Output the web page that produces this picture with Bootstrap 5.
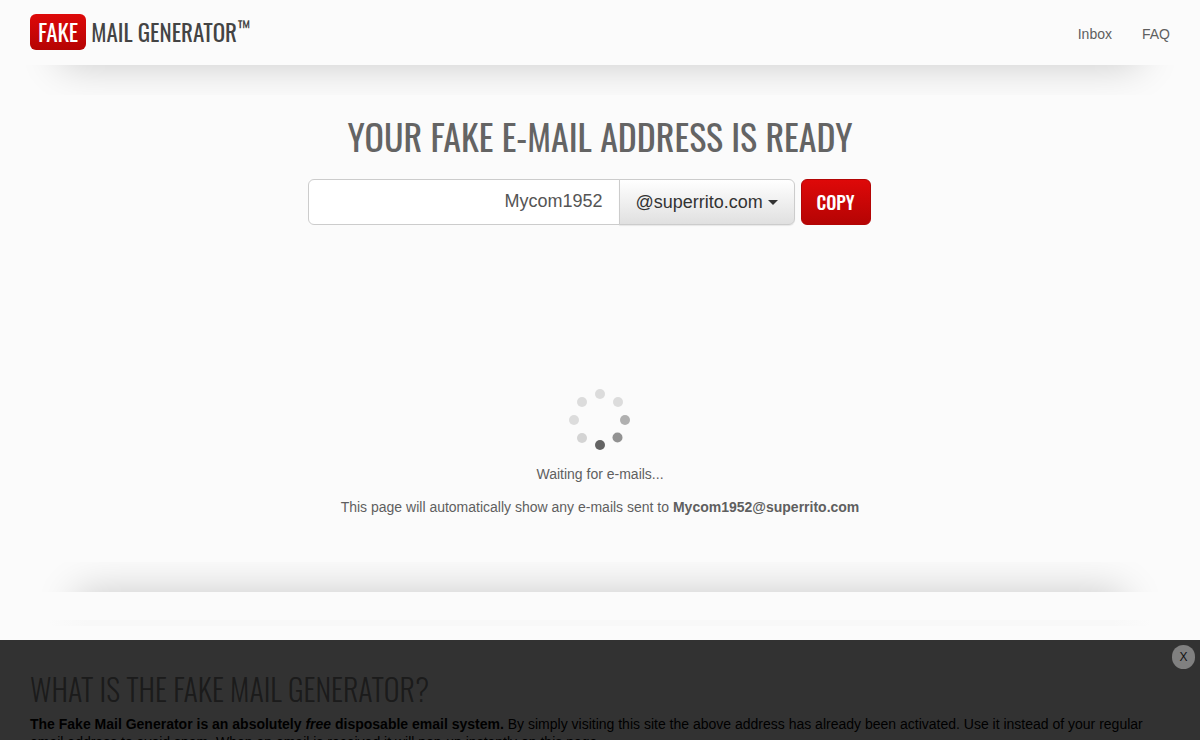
<!DOCTYPE html>
<html lang="en">
<head>
<meta charset="utf-8">
<meta name="viewport" content="width=device-width, initial-scale=1">
<title>Fake Mail Generator</title>
<link href="https://cdn.jsdelivr.net/npm/bootstrap@5.3.0/dist/css/bootstrap.min.css" rel="stylesheet">
<style>
  body { background: #fbfbfb; color: #5f5f5f; font: 14px/20px "Liberation Sans", Arial, sans-serif; }
  .display-face { font-family: Oswald, "Liberation Sans Narrow", "Roboto Condensed", sans-serif; }
  .page-pad { padding-left: 30px; padding-right: 30px; }
  .site-head { height: 65px; padding-top: 14px; }
  .brand { color: #444; font-size: 23px; line-height: 36px; gap: 5px; }
  .brand:hover { color: #222; }
  .brand-tag { background: linear-gradient(#de0909, #b50404); color: #fff; border-radius: 6px; padding: 0 8px; }
  .brand-tm { font-size: 18px; line-height: 26px; }
  .top-nav { gap: 30px; padding-top: 10px; }
  .top-nav a { color: #5f5f5f; }
  .shade { height: 30px; overflow: hidden; }
  .shade::before { content: ""; display: block; height: 80px; box-shadow: 0 0 40px rgba(0,0,0,.2); }
  .shade-down::before { margin: -80px 60px 0; }
  .shade-up::before { margin: 30px 76px 0; }
  .shade-thin { height: 6px; margin: 28px 48px 0; background: linear-gradient(90deg, #fbfbfb, #f8f8f8 40px, #f8f8f8 calc(100% - 40px), #fbfbfb); }
  .ready-title { font-size: 36px; line-height: 44px; color: #646464; margin: 19px 0 21px; }
  .addr-row { gap: 6px; padding-right: 22px; }
  .addr-group { width: 487px; }
  .addr-group .form-control { height: 46px; font-size: 18px; line-height: 24px; color: #555; border-color: #ccc; border-radius: 6px; padding: 9px 16px 11px; text-align: right; background: #fff; }
  .btn-domain { width: 176px; font-size: 18px; line-height: 24px; color: #333; border: 1px solid #ccc; border-radius: 6px; background: linear-gradient(#fff, #e0e0e0); padding: 10px 16px; white-space: nowrap; box-shadow: 0 1px 1px rgba(0,0,0,.08); }
  .btn-domain::after { margin-left: 5px; vertical-align: 3px; border-top-width: 5px; border-left-width: 5px; border-right-width: 5px; }
  .btn-copy { width: 70px; height: 46px; padding: 0; font-size: 18px; font-weight: 500; color: #fff; border: 1px solid #b30505; border-radius: 6px; background: linear-gradient(#de0909, #b50404); }
  .btn-copy:hover { color: #fff; }
  .wait-box { padding: 162px 0 32px; }
  .spin-dots { margin-bottom: 13px; }
  .wait-box p { margin: 0 0 13px; }
  .about { padding-top: 44px; color: #000; }
  .about h2 { font-size: 30px; line-height: 38px; color: #858585; margin: 0 0 7px; }
  .about p { line-height: 18px; }
  .ad-bar { height: 100px; background: rgba(0,0,0,.8); }
  .ad-close { top: 5px; right: 5px; width: 23px; height: 24px; border: 0; border-radius: 12px; background: #808080; color: #111; font-size: 12px; line-height: 24px; padding: 0; }
</style>
</head>
<body>
<header class="site-head page-pad d-flex justify-content-between align-items-start">
  <a href="#" class="brand display-face d-flex text-decoration-none"><span class="brand-tag">FAKE</span><span class="d-flex"><span>MAIL GENERATOR</span><span class="brand-tm">™</span></span></a>
  <nav class="top-nav d-flex" aria-label="Main"><a class="text-decoration-none" href="#inbox">Inbox</a><a class="text-decoration-none" href="#faq">FAQ</a></nav>
</header>
<div class="shade shade-down"></div>
<main id="inbox" class="text-center">
  <h1 class="ready-title display-face fw-normal">YOUR FAKE E-MAIL ADDRESS IS READY</h1>
  <form class="addr-row d-flex justify-content-center">
    <div class="addr-group input-group flex-nowrap">
      <input type="text" class="form-control" value="Mycom1952" aria-label="E-mail name">
      <button type="button" class="btn btn-domain dropdown-toggle" data-bs-toggle="dropdown" aria-expanded="false">@superrito.com</button>
      <ul class="dropdown-menu dropdown-menu-end"><li><a class="dropdown-item" href="#">@superrito.com</a></li></ul>
    </div>
    <button type="button" class="btn btn-copy display-face">COPY</button>
  </form>
  <div class="wait-box">
    <svg class="spin-dots d-block mx-auto" width="64" height="64" viewBox="0 0 64 64" aria-hidden="true">
      <circle cx="32" cy="7" r="5" fill="#dcdcdc"/><circle cx="50" cy="15" r="5" fill="#dcdcdc"/>
      <circle cx="57" cy="33" r="5" fill="#b0b0b0"/><circle cx="49.500" cy="50.500" r="5" fill="#929292"/>
      <circle cx="32" cy="58" r="5" fill="#646464"/><circle cx="14" cy="51" r="5" fill="#d4d4d4"/>
      <circle cx="6" cy="33" r="5" fill="#dcdcdc"/><circle cx="14" cy="15" r="5" fill="#dcdcdc"/>
    </svg>
    <p>Waiting for e-mails...</p>
    <p>This page will automatically show any e-mails sent to <strong>Mycom1952@superrito.com</strong></p>
  </div>
</main>
<div class="shade shade-up"></div>
<div class="shade-thin"></div>
<section class="about page-pad" id="faq">
  <h2 class="display-face fw-light">WHAT IS THE FAKE MAIL GENERATOR?</h2>
  <p><strong>The Fake Mail Generator is an absolutely <em>free</em> disposable email system.</strong> By simply visiting this site the above address has already been activated. Use it instead of your regular email address to avoid spam. When an email is received it will pop-up instantly on this page.</p>
</section>
<aside class="ad-bar fixed-bottom"><button type="button" class="ad-close position-absolute" aria-label="Close">X</button></aside>
<script src="https://cdn.jsdelivr.net/npm/bootstrap@5.3.0/dist/js/bootstrap.bundle.min.js"></script>
</body>
</html>
